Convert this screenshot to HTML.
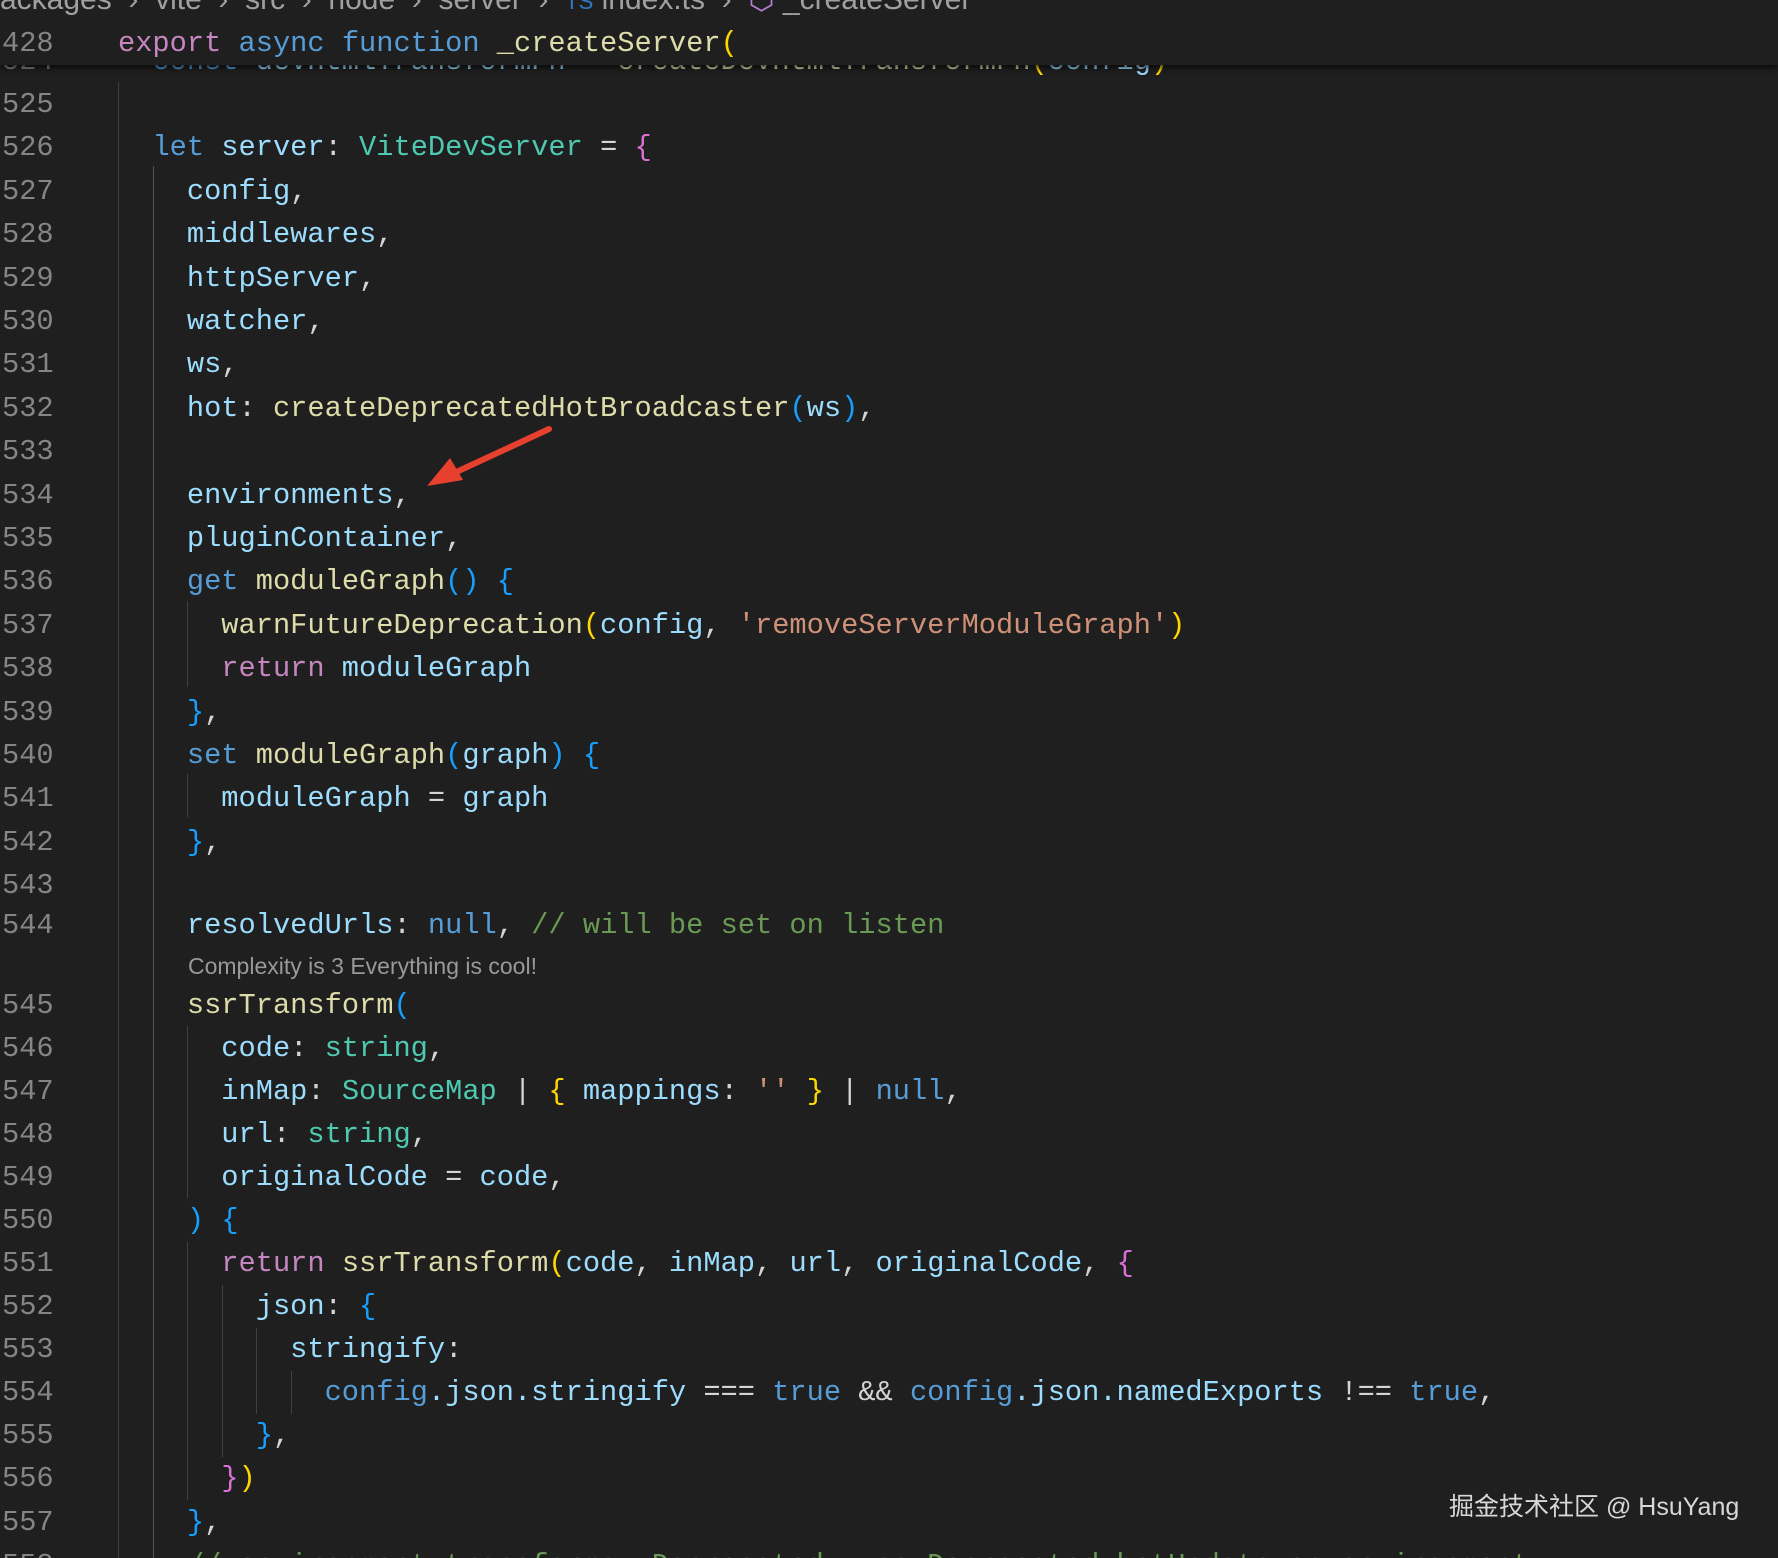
<!DOCTYPE html>
<html><head><meta charset="utf-8"><style>
html,body{margin:0;padding:0;background:#1f1f1f;width:1778px;height:1558px;overflow:hidden;position:relative}
.l{position:absolute;left:0;height:44px;line-height:44px;white-space:pre;font-family:"Liberation Mono",monospace;font-size:28.7px;color:#9cdcfe;margin-top:2px}
.n{position:absolute;left:2px;color:#858585}
.c{position:absolute;left:118px}
.k{color:#c586c0}.b{color:#569cd6}.f{color:#dcdcaa}.t{color:#4ec9b0}.s{color:#ce9178}.cm{color:#6a9955}.w{color:#d4d4d4}
.y{color:#ffd700}.p{color:#da70d6}.bl{color:#179fff}
.g{position:absolute;width:1px;background:#404040}
#hdr{position:absolute;left:0;top:0;width:1778px;height:65px;background:#1f1f1f;box-shadow:0 3px 6px rgba(0,0,0,.7);z-index:5}
</style></head><body>
<div class="g" style="left:118px;top:82px;height:1476px"></div>
<div class="g" style="left:153px;top:166px;height:1392px;background:#555"></div>
<div class="g" style="left:187px;top:601px;height:86px"></div>
<div class="g" style="left:187px;top:774px;height:43px"></div>
<div class="g" style="left:187px;top:1026px;height:172px"></div>
<div class="g" style="left:187px;top:1242px;height:258px"></div>
<div class="g" style="left:222px;top:1285px;height:172px"></div>
<div class="g" style="left:256px;top:1328px;height:86px"></div>
<div class="g" style="left:291px;top:1371px;height:43px"></div>

<div class="l" style="top:38px"><span class="n">524</span><span class="c">  <span class="b">const</span> devHtmlTransformFn = <span class="f">createDevHtmlTransformFn</span><span class="y">(</span>config<span class="y">)</span></span></div>
<div class="l" style="top:81px"><span class="n">525</span></div>
<div class="l" style="top:124px"><span class="n">526</span><span class="c">  <span class="b">let</span> server<span class="w">:</span> <span class="t">ViteDevServer</span> <span class="w">=</span> <span class="p">{</span></span></div>
<div class="l" style="top:168px"><span class="n">527</span><span class="c">    config<span class="w">,</span></span></div>
<div class="l" style="top:211px"><span class="n">528</span><span class="c">    middlewares<span class="w">,</span></span></div>
<div class="l" style="top:255px"><span class="n">529</span><span class="c">    httpServer<span class="w">,</span></span></div>
<div class="l" style="top:298px"><span class="n">530</span><span class="c">    watcher<span class="w">,</span></span></div>
<div class="l" style="top:341px"><span class="n">531</span><span class="c">    ws<span class="w">,</span></span></div>
<div class="l" style="top:385px"><span class="n">532</span><span class="c">    hot<span class="w">:</span> <span class="f">createDeprecatedHotBroadcaster</span><span class="bl">(</span>ws<span class="bl">)</span><span class="w">,</span></span></div>
<div class="l" style="top:428px"><span class="n">533</span></div>
<div class="l" style="top:472px"><span class="n">534</span><span class="c">    environments<span class="w">,</span></span></div>
<div class="l" style="top:515px"><span class="n">535</span><span class="c">    pluginContainer<span class="w">,</span></span></div>
<div class="l" style="top:558px"><span class="n">536</span><span class="c">    <span class="b">get</span> <span class="f">moduleGraph</span><span class="bl">()</span> <span class="bl">{</span></span></div>
<div class="l" style="top:602px"><span class="n">537</span><span class="c">      <span class="f">warnFutureDeprecation</span><span class="y">(</span>config<span class="w">,</span> <span class="s">'removeServerModuleGraph'</span><span class="y">)</span></span></div>
<div class="l" style="top:645px"><span class="n">538</span><span class="c">      <span class="k">return</span> moduleGraph</span></div>
<div class="l" style="top:689px"><span class="n">539</span><span class="c">    <span class="bl">}</span><span class="w">,</span></span></div>
<div class="l" style="top:732px"><span class="n">540</span><span class="c">    <span class="b">set</span> <span class="f">moduleGraph</span><span class="bl">(</span>graph<span class="bl">)</span> <span class="bl">{</span></span></div>
<div class="l" style="top:775px"><span class="n">541</span><span class="c">      moduleGraph <span class="w">=</span> graph</span></div>
<div class="l" style="top:819px"><span class="n">542</span><span class="c">    <span class="bl">}</span><span class="w">,</span></span></div>
<div class="l" style="top:862px"><span class="n">543</span></div>
<div class="l" style="top:902px"><span class="n">544</span><span class="c">    resolvedUrls<span class="w">:</span> <span class="b">null</span><span class="w">,</span> <span class="cm">// will be set on listen</span></span></div>
<div style="position:absolute;left:188px;top:953px;font-family:'Liberation Sans',sans-serif;font-size:23px;color:#999">Complexity is 3 Everything is cool!</div>
<div class="l" style="top:982px"><span class="n">545</span><span class="c">    <span class="f">ssrTransform</span><span class="bl">(</span></span></div>
<div class="l" style="top:1025px"><span class="n">546</span><span class="c">      code<span class="w">:</span> <span class="t">string</span><span class="w">,</span></span></div>
<div class="l" style="top:1068px"><span class="n">547</span><span class="c">      inMap<span class="w">:</span> <span class="t">SourceMap</span> <span class="w">|</span> <span class="y">{</span> mappings<span class="w">:</span> <span class="s">''</span> <span class="y">}</span> <span class="w">|</span> <span class="b">null</span><span class="w">,</span></span></div>
<div class="l" style="top:1111px"><span class="n">548</span><span class="c">      url<span class="w">:</span> <span class="t">string</span><span class="w">,</span></span></div>
<div class="l" style="top:1154px"><span class="n">549</span><span class="c">      originalCode <span class="w">=</span> code<span class="w">,</span></span></div>
<div class="l" style="top:1197px"><span class="n">550</span><span class="c">    <span class="bl">)</span> <span class="bl">{</span></span></div>
<div class="l" style="top:1240px"><span class="n">551</span><span class="c">      <span class="k">return</span> <span class="f">ssrTransform</span><span class="y">(</span>code<span class="w">,</span> inMap<span class="w">,</span> url<span class="w">,</span> originalCode<span class="w">,</span> <span class="p">{</span></span></div>
<div class="l" style="top:1283px"><span class="n">552</span><span class="c">        json<span class="w">:</span> <span class="bl">{</span></span></div>
<div class="l" style="top:1326px"><span class="n">553</span><span class="c">          stringify<span class="w">:</span></span></div>
<div class="l" style="top:1369px"><span class="n">554</span><span class="c">            <span class="b">config</span>.json.stringify <span class="w">===</span> <span class="b">true</span> <span class="w">&amp;&amp;</span> <span class="b">config</span>.json.namedExports <span class="w">!==</span> <span class="b">true</span><span class="w">,</span></span></div>
<div class="l" style="top:1412px"><span class="n">555</span><span class="c">        <span class="bl">}</span><span class="w">,</span></span></div>
<div class="l" style="top:1455px"><span class="n">556</span><span class="c">      <span class="p">}</span><span class="y">)</span></span></div>
<div class="l" style="top:1499px"><span class="n">557</span><span class="c">    <span class="bl">}</span><span class="w">,</span></span></div>
<div class="l" style="top:1542px"><span class="n">558</span><span class="c">    <span class="cm">// environment transforms: Deprecated, use Deprecated.hotUpdate on environment</span></span></div>

<div id="hdr">
<div style="position:absolute;left:0;top:-18px;font-family:'Liberation Sans',sans-serif;font-size:30px;color:#a0a0a0;white-space:pre">ackages  ›  vite  ›  src  ›  node  ›  server  ›  <span style="color:#3178c6;font-size:22px">TS</span> index.ts  ›  <span style="color:#b180d7">⬡</span> _createServer</div>
<div class="l" style="top:20px"><span class="n">428</span><span class="c"><span class="k">export</span> <span class="b">async</span> <span class="b">function</span> <span class="f">_createServer</span><span class="y">(</span></span></div>
</div>

<svg style="position:absolute;left:0;top:0" width="1778" height="1558">
<line x1="549" y1="429" x2="452" y2="474" stroke="#e8402f" stroke-width="6" stroke-linecap="round"/>
<polygon points="427,486 450,458 463,480" fill="#e8402f"/>
</svg>
<div style="position:absolute;left:1449px;top:1487px;font-family:'Liberation Sans','Noto Sans CJK SC',sans-serif;font-size:25px;color:#d8d8d8">掘金技术社区 @ HsuYang</div>
</body></html>
